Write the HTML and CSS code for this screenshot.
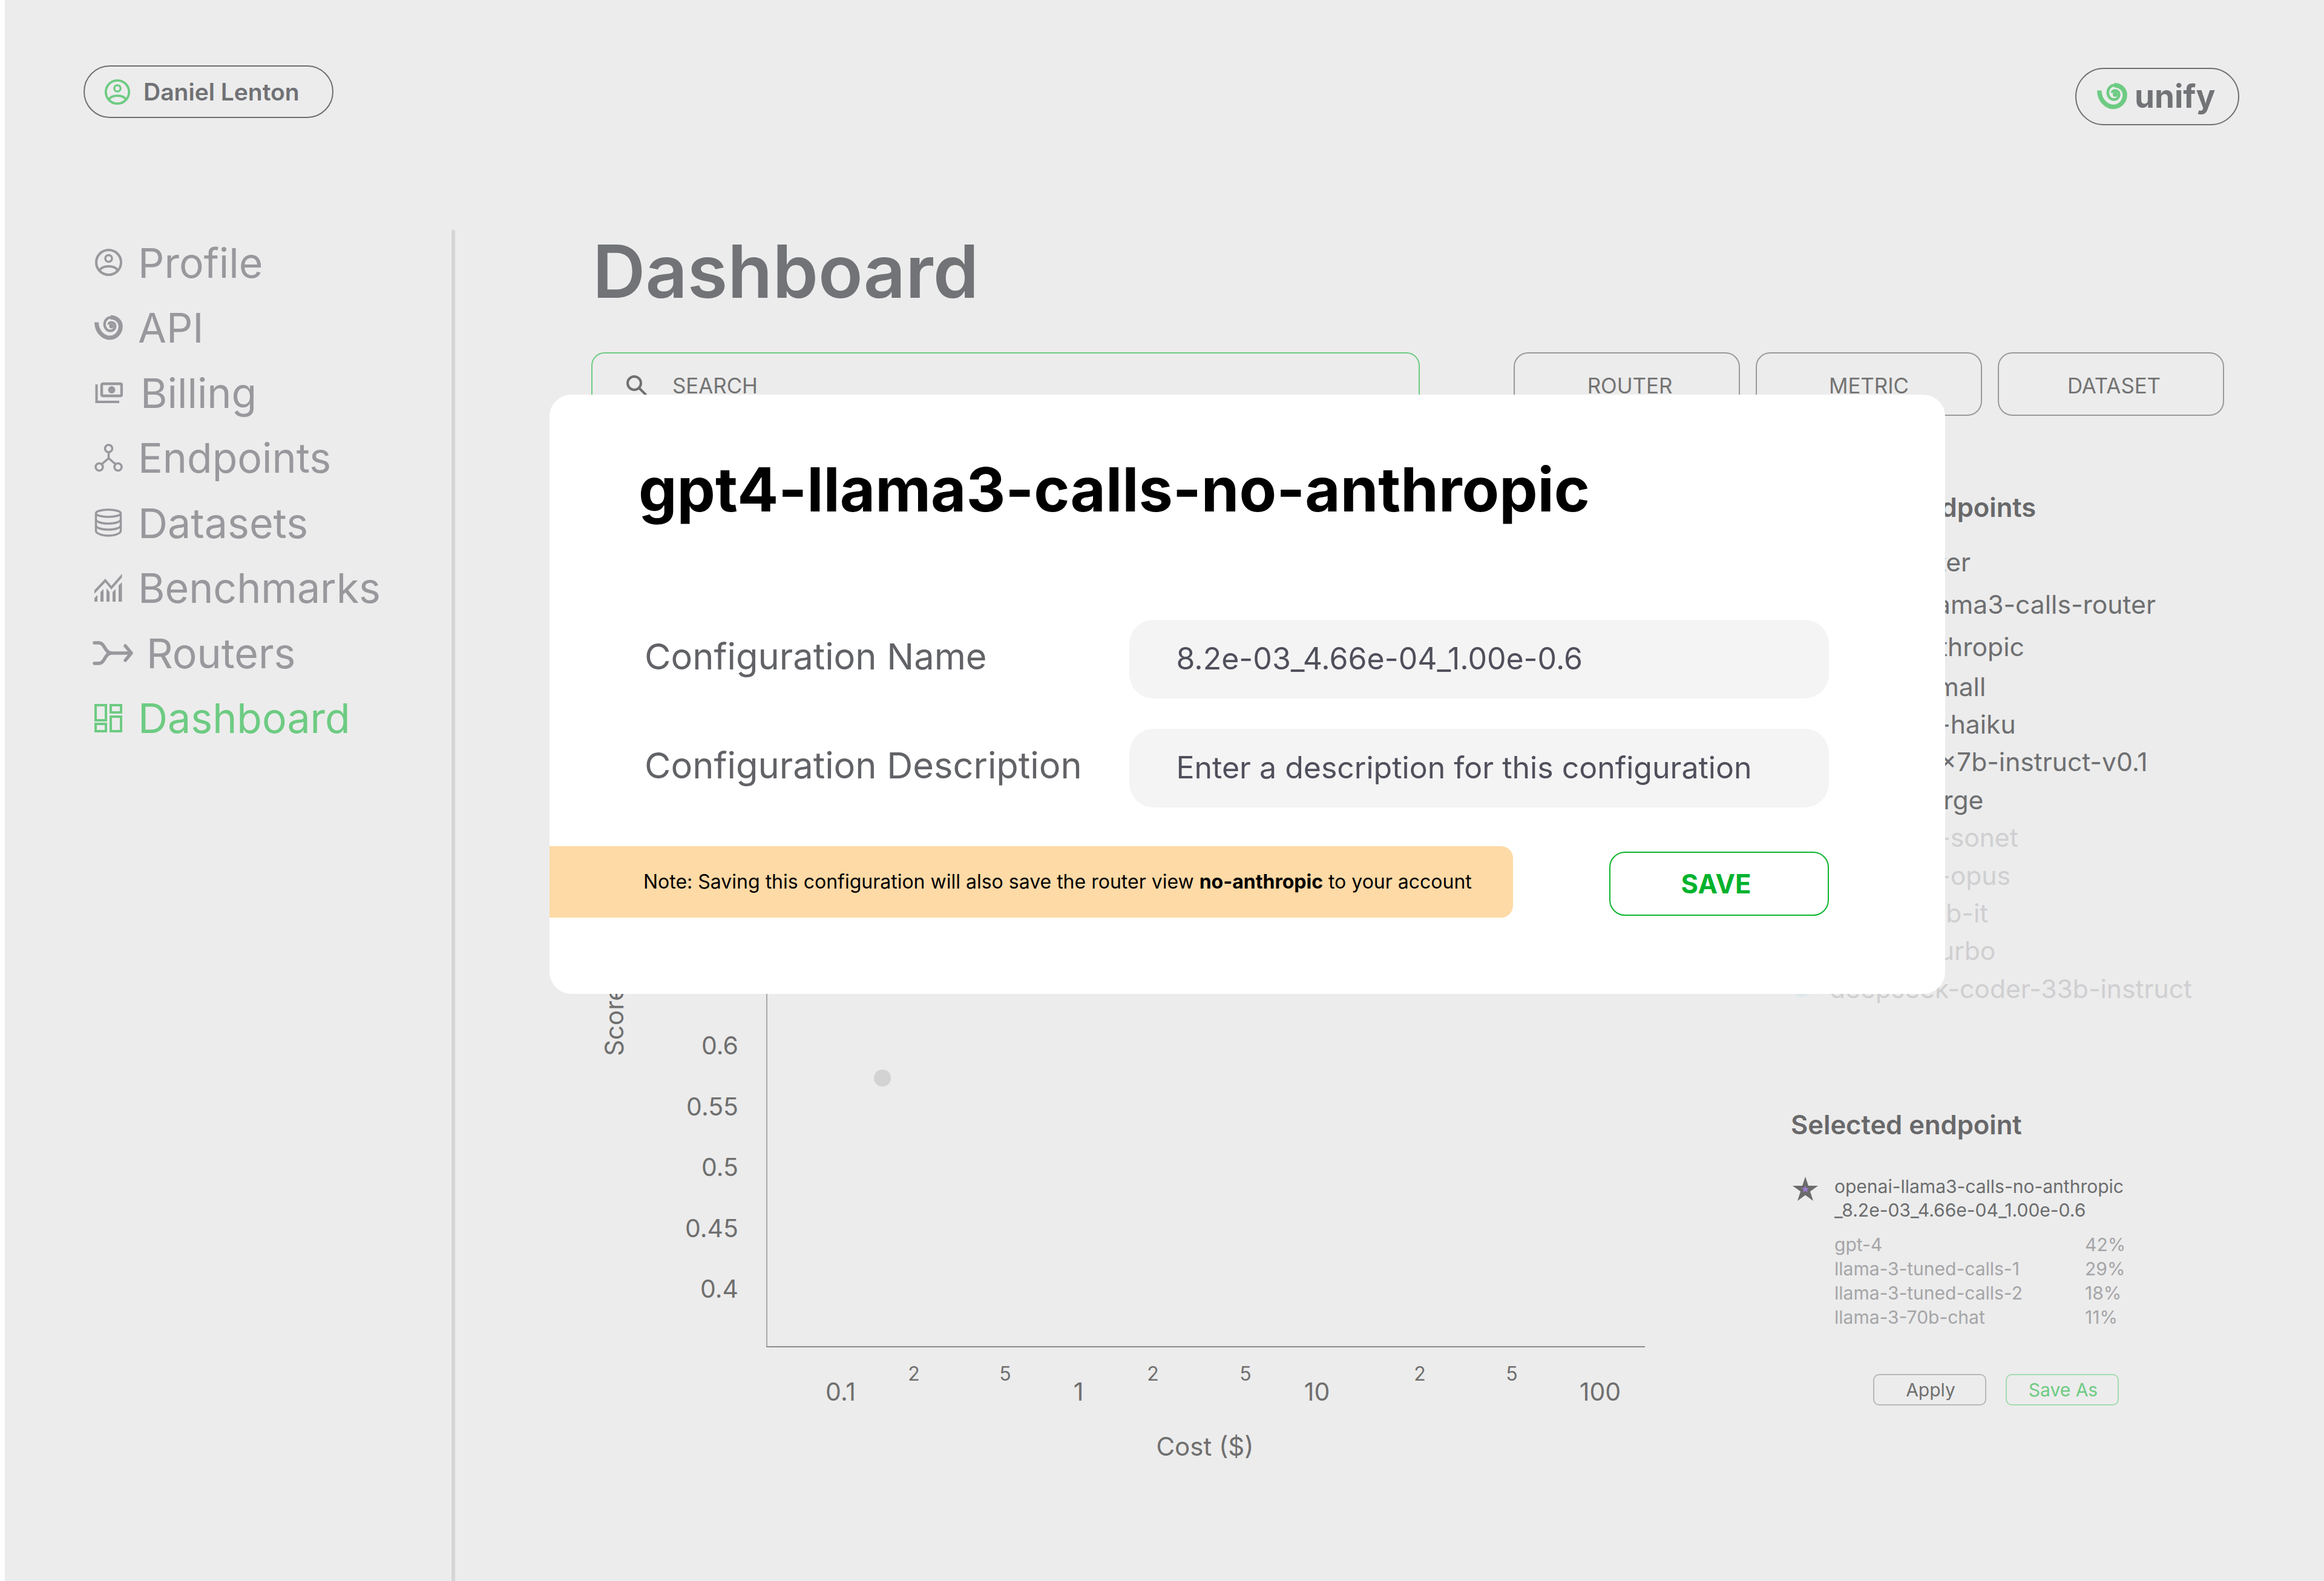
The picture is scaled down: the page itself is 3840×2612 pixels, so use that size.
FILE: index.html
```html
<!DOCTYPE html>
<html lang="en">
  <head>
    <meta charset="UTF-8" />
    <meta name="viewport" content="width=device-width, initial-scale=1.0" />
    <title>Dashboard</title>
    <link rel="stylesheet" href="styles.css">
  </head>

  <body>
    <svg class="defs" width="0" height="0">
      <symbol id="i-user" viewBox="0 0 47 47">
        <circle cx="23.5" cy="23.5" r="20.5" fill="none" stroke="currentColor" stroke-width="4" />
        <circle cx="23.5" cy="17" r="5.5" fill="none" stroke="currentColor" stroke-width="3.5" />
        <path d="M9 36c5-8 24-8 29 0" fill="none" stroke="currentColor" stroke-width="4" />
      </symbol>
      <symbol id="i-spiral" viewBox="0 0 50 44">
        <path d="M3.800 12.500C3.800 28 15 39.500 27 39.500C38 39.500 46 30 46 20C46 10 38 3.700 28.500 3.700" fill="none" stroke="currentColor" stroke-width="7.500" />
        <path d="M29.500 3.700C22 3.700 17.800 9.500 17.800 16C17.800 22.500 22.500 27.500 28 27.500C33 27.500 36.500 23.500 36.500 19C36.500 15 33 12.500 29.500 12.500C27 12.500 25 14 25 16.500" fill="none" stroke="currentColor" stroke-width="4.500" />
        <circle cx="30" cy="19" r="4" fill="currentColor" />
      </symbol>
    </svg>

    <div class="app">
      <header class="topbar">
        <div class="user-pill">
          <svg class="user-icon"><use href="#i-user" /></svg>
          <span>Daniel Lenton</span>
        </div>
        <div class="logo-pill">
          <svg class="logo-icon"><use href="#i-spiral" /></svg>
          <span>unify</span>
        </div>
      </header>

      <div class="layout">
        <nav class="sidebar">
          <a class="nav-item">
            <svg class="nav-icon"><use href="#i-user" /></svg>
            <span>Profile</span>
          </a>
          <a class="nav-item">
            <svg class="nav-icon" viewBox="0 0 50 47"><use href="#i-spiral" width="50" height="47" /></svg>
            <span>API</span>
          </a>
          <a class="nav-item nav-billing">
            <svg class="nav-icon" viewBox="0 0 47 47">
              <path d="M3.5 10V39H41" fill="none" stroke="currentColor" stroke-width="4" />
              <rect x="12" y="9" width="33" height="20" rx="2" fill="none" stroke="currentColor" stroke-width="4.5" />
              <circle cx="28.5" cy="19" r="6" fill="currentColor" />
            </svg>
            <span>Billing</span>
          </a>
          <a class="nav-item">
            <svg class="nav-icon" viewBox="0 0 47 47" fill="none" stroke="currentColor" stroke-width="3.5">
              <circle cx="23.5" cy="8" r="6" />
              <circle cx="8" cy="38.5" r="6" />
              <circle cx="39" cy="38.5" r="6" />
              <path d="M23.5 14V24L12 34M23.5 24L35 34" />
            </svg>
            <span>Endpoints</span>
          </a>
          <a class="nav-item">
            <svg class="nav-icon" viewBox="0 0 47 47" fill="none" stroke="currentColor" stroke-width="3.5">
              <ellipse cx="23" cy="8" rx="20.5" ry="6" />
              <path d="M2.5 8V37C2.5 41 11.5 45 23 45S43.500 41 43.500 37V8" />
              <path d="M2.5 18C2.5 22 11.500 25 23 25S43.500 22 43.500 18M2.500 28C2.500 32 11.500 35 23 35S43.500 32 43.500 28" />
            </svg>
            <span>Datasets</span>
          </a>
          <a class="nav-item">
            <svg class="nav-icon" viewBox="0 0 47 47">
              <path d="M0 27L18 8L28 20L45.500 0V6L28 26L18 14L0 33Z" fill="currentColor" />
              <path d="M0 40L5 35V46H0ZM10 30L15 25V46H10ZM20 24L25 30V46H20ZM30 30L35 25V46H30ZM40 19L45.500 14V46H40Z" fill="currentColor" />
            </svg>
            <span>Benchmarks</span>
          </a>
          <a class="nav-item nav-routers">
            <svg class="nav-icon" viewBox="0 0 67 40" fill="none" stroke="currentColor" stroke-width="5.500" stroke-linecap="round" stroke-linejoin="round">
              <path d="M3 3H10C21 3 19 20 32 20H63M3 37H10C21 37 19 20 32 20" />
              <path d="M54 8L64 20L54 32" />
            </svg>
            <span>Routers</span>
          </a>
          <a class="nav-item nav-active">
            <svg class="nav-icon" viewBox="0 0 47 47" fill="none" stroke="currentColor" stroke-width="4">
              <rect x="2" y="2" width="17" height="25" />
              <rect x="27" y="2" width="17" height="12" />
              <rect x="2" y="33" width="17" height="12" />
              <rect x="27" y="21" width="17" height="24" />
            </svg>
            <span>Dashboard</span>
          </a>
        </nav>

        <main class="content">
          <h1 class="page-title">Dashboard</h1>

          <div class="toolbar">
            <div class="search">
              <svg class="search-icon" viewBox="0 0 34 34" fill="none" stroke="currentColor" stroke-width="4">
                <circle cx="13" cy="13" r="11" />
                <path d="M21 21L33 33" />
              </svg>
              <span>SEARCH</span>
            </div>
            <div class="filters">
              <button class="filter-btn">ROUTER</button>
              <button class="filter-btn filter-metric">METRIC</button>
              <button class="filter-btn">DATASET</button>
            </div>
          </div>

          <div class="panels">
            <div class="chart">
              <div class="plot"></div>
              <span class="axis-title score-title">Score</span>
              <span class="tick y-tick" style="top: 1040px">0.6</span>
              <span class="tick y-tick" style="top: 1141px">0.55</span>
              <span class="tick y-tick" style="top: 1241px">0.5</span>
              <span class="tick y-tick" style="top: 1342px">0.45</span>
              <span class="tick y-tick" style="top: 1442px">0.4</span>
              <span class="tick x-tick" style="left: 412px">0.1</span>
              <span class="tick x-tick" style="left: 805px">1</span>
              <span class="tick x-tick" style="left: 1199px">10</span>
              <span class="tick x-tick" style="left: 1667px">100</span>
              <span class="tick x-minor" style="left: 533px">2</span>
              <span class="tick x-minor" style="left: 684px">5</span>
              <span class="tick x-minor" style="left: 928px">2</span>
              <span class="tick x-minor" style="left: 1081px">5</span>
              <span class="tick x-minor" style="left: 1369px">2</span>
              <span class="tick x-minor" style="left: 1521px">5</span>
              <span class="axis-title cost-title">Cost ($)</span>
              <span class="dot" style="left: 481px; top: 1094px"></span>
            </div>

            <aside class="side">
              <h3 class="side-title">Selected endpoints</h3>
              <ul class="endpoint-list">
                <li class="endpoint endpoint-tall"><i></i>gpt4-router</li>
                <li class="endpoint endpoint-tall"><i></i>openai-llama3-calls-router</li>
                <li class="endpoint endpoint-tall"><i></i>gpt-4-anthropic</li>
                <li class="endpoint"><i></i>mistral-small</li>
                <li class="endpoint"><i></i>claude-3-haiku</li>
                <li class="endpoint"><i></i>mixtral-8x7b-instruct-v0.1</li>
                <li class="endpoint"><i></i>mistral-large</li>
                <li class="endpoint endpoint-off"><i></i>claude-3-sonet</li>
                <li class="endpoint endpoint-off"><i></i>claude-3-opus</li>
                <li class="endpoint endpoint-off"><i></i>gemma-7b-it</li>
                <li class="endpoint endpoint-off"><i></i>gpt-3.5-turbo</li>
                <li class="endpoint endpoint-off"><i></i>deepseek-coder-33b-instruct</li>
              </ul>

              <h3 class="side-title selected-title">Selected endpoint</h3>
              <div class="selected">
                <svg class="star" viewBox="0 0 42 40">
                  <path d="M21 0L26 15H42L29 24.500L34 40L21 30.500L8 40L13 24.500L0 15H16Z" fill="#6b6b6b" />
                  <path d="M21 15L22.500 19H27L23.500 21.800L24.800 26L21 23.500L17.200 26L18.500 21.800L15 19H19.500Z" fill="#a07fd8" />
                </svg>
                <div class="selected-body">
                  <div class="selected-name">openai-llama3-calls-no-anthropic<br />_8.2e-03_4.66e-04_1.00e-0.6</div>
                  <div class="share-grid">
                    <span>gpt-4</span><span>42%</span>
                    <span>llama-3-tuned-calls-1</span><span>29%</span>
                    <span>llama-3-tuned-calls-2</span><span>18%</span>
                    <span>llama-3-70b-chat</span><span>11%</span>
                  </div>
                </div>
              </div>
              <div class="side-actions">
                <button class="small-btn">Apply</button>
                <button class="small-btn small-btn-green">Save As</button>
              </div>
            </aside>
          </div>
        </main>
      </div>

      <!-- save dialog, sits over the dashboard -->
      <div class="modal">
        <h2 class="modal-title">gpt4-llama3-calls-no-anthropic</h2>
        <form class="modal-form">
          <label class="field-label">Configuration Name</label>
          <div class="field-input">8.2e-03_4.66e-04_1.00e-0.6</div>
          <label class="field-label">Configuration Description</label>
          <div class="field-input">Enter a description for this configuration</div>
        </form>
        <div class="modal-footer">
          <div class="note">Note: Saving this configuration will also save the router view <b>no-anthropic</b> to your account</div>
          <button class="save-btn">SAVE</button>
        </div>
      </div>
    </div>
  </body>
</html>
```

FILE: styles.css
```css
* {
  box-sizing: border-box;
}

body {
  margin: 0;
  background: #ffffff;
  font-family: "Inter", "Liberation Sans", sans-serif;
}

.defs {
  position: absolute;
}

.app {
  position: relative;
  margin-left: 8px;
  height: 2612px;
  background: #ececec;
  overflow: hidden;
}

/* top bar */
.topbar {
  display: flex;
  justify-content: space-between;
  align-items: flex-start;
  height: 380px;
  padding: 108px 140px 0 130px;
}

.user-pill {
  display: flex;
  align-items: center;
  gap: 21px;
  width: 413px;
  height: 87px;
  padding-left: 32px;
  border: 2px solid #6f6f72;
  border-radius: 44px;
  color: #707175;
  font-size: 39px;
  font-weight: 600;
}

.user-icon {
  width: 44px;
  height: 44px;
  color: #6dcb82;
}

.logo-pill {
  display: flex;
  align-items: center;
  gap: 12px;
  width: 271px;
  height: 95px;
  margin-top: 4px;
  padding: 0 0 1px 34px;
  border: 2px solid #6f6f72;
  border-radius: 48px;
  color: #727376;
  font-size: 53px;
  font-weight: 700;
}

.logo-icon {
  width: 50px;
  height: 44px;
  color: #6dcb82;
}

.layout {
  display: flex;
  height: 2232px;
}

/* sidebar */
.sidebar {
  flex: none;
  width: 744px;
  padding-left: 148px;
  border-right: 6px solid #d6d6d6;
}

.nav-item {
  display: flex;
  align-items: center;
  gap: 25px;
  height: 107.5px;
  color: #98989d;
  font-size: 68px;
}

.nav-icon {
  flex: none;
  width: 47px;
  height: 47px;
}

.nav-billing {
  gap: 29px;
}

.nav-routers {
  gap: 22px;
  margin-left: -3px;
}

.nav-routers .nav-icon {
  width: 67px;
  height: 40px;
}

.nav-active {
  color: #6dcb82;
}

/* main */
.content {
  flex: 1;
  padding-left: 225px;
}

.page-title {
  height: 202px;
  margin: 0 0 0 2px;
  color: #717377;
  font-size: 121px;
  font-weight: 600;
  line-height: 136px;
}

.toolbar {
  display: flex;
  gap: 155px;
}

.search {
  display: flex;
  align-items: center;
  gap: 42px;
  width: 1369px;
  height: 105px;
  padding: 5px 0 0 56px;
  border: 2px solid #6dcb82;
  border-radius: 22px;
  color: #737373;
  font-size: 34.8px;
}

.search-icon {
  width: 34px;
  height: 34px;
  color: #6f6f6f;
}

.filters {
  display: flex;
  gap: 26px;
}

.filter-btn {
  width: 374px;
  height: 105px;
  padding: 5px 0 0 10px;
  border: 2px solid #9a9a9a;
  border-radius: 24px;
  background: none;
  color: #737373;
  font-family: inherit;
  font-size: 34.8px;
}

.filter-metric {
  padding-left: 0;
}

.panels {
  display: flex;
}

/* chart is a free canvas, origin at the panel top left */
.chart {
  position: relative;
  flex: none;
  width: 1982px;
  height: 1800px;
  color: #6f6f6f;
}

.plot {
  position: absolute;
  left: 289px;
  top: 500px;
  width: 1452px;
  height: 1039px;
  border-left: 2px solid #a8a8a8;
  border-bottom: 2px solid #8a8a8a;
}

.tick {
  position: absolute;
  line-height: 1;
}

.y-tick {
  left: 243px;
  font-size: 41px;
  transform: translate(-100%, -50%);
}

.x-tick {
  top: 1612px;
  font-size: 41px;
  transform: translate(-50%, -50%);
}

.x-minor {
  top: 1583px;
  font-size: 32px;
  transform: translate(-50%, -50%);
}

.axis-title {
  position: absolute;
  font-size: 42px;
  line-height: 1;
}

.score-title {
  left: 38px;
  top: 1000px;
  transform: translate(-50%, -50%) rotate(-90deg);
}

.cost-title {
  left: 1014px;
  top: 1703px;
  transform: translate(-50%, -50%);
}

.dot {
  position: absolute;
  width: 28px;
  height: 28px;
  border-radius: 50%;
  background: #d3d3d3;
  transform: translate(-50%, -50%);
}

/* right column */
.side {
  flex: 1;
  padding-top: 125px;
}

.side-title {
  margin: 0;
  color: #68686a;
  font-size: 43.5px;
  font-weight: 600;
  line-height: 52px;
}

.endpoint-list {
  margin: 29px 0 0;
  padding: 0;
  list-style: none;
}

.endpoint {
  display: flex;
  align-items: center;
  gap: 31px;
  height: 62.4px;
  color: #6e6f71;
  font-size: 42.6px;
  white-space: nowrap;
}

.endpoint i {
  flex: none;
  width: 30px;
  height: 30px;
  margin-left: 3px;
  border-radius: 50%;
  background: #dfe8ea;
}

.endpoint-tall {
  height: 70px;
}

.endpoint-off {
  color: #cfcfd1;
}

.selected-title {
  margin-top: 167px;
}

.selected {
  display: flex;
  gap: 27px;
  margin-top: 57px;
}

.star {
  flex: none;
  width: 42px;
  height: 40px;
  margin: 3px 0 0 3px;
}

.selected-body {
  flex: 1;
}

.selected-name {
  color: #6b6c6e;
  font-size: 30px;
  line-height: 39.5px;
}

.share-grid {
  display: grid;
  grid-template-columns: 414px auto;
  margin-top: 16px;
  color: #a5a5a8;
  font-size: 30px;
  line-height: 40px;
}

.side-actions {
  display: flex;
  gap: 32px;
  margin: 74px 0 0 136px;
}

.small-btn {
  width: 187px;
  height: 52px;
  padding: 0 0 0 3px;
  border: 2px solid #b8b8b8;
  border-radius: 10px;
  background: none;
  color: #6f6f6f;
  font-family: inherit;
  font-size: 30px;
}

.small-btn-green {
  border-color: #a3dcb0;
  color: #6dcb82;
}

/* modal */
.modal {
  position: absolute;
  left: 900px;
  top: 652px;
  width: 2306px;
  height: 990px;
  padding-top: 97px;
  border-radius: 36px;
  background: #ffffff;
}

.modal-title {
  margin: 0;
  padding-left: 147px;
  color: #000000;
  font-size: 100.6px;
  font-weight: 700;
  line-height: 120px;
}

.modal-form {
  display: grid;
  grid-template-columns: 800.5px 1156.5px;
  row-gap: 50px;
  align-items: center;
  margin-top: 155px;
  padding-left: 157px;
}

.field-label {
  margin-bottom: 11px;
  color: #626367;
  font-size: 59.6px;
}

.field-input {
  height: 130px;
  padding-left: 78px;
  border-radius: 40px;
  background: #f4f4f5;
  color: #50505c;
  font-size: 50px;
  line-height: 129px;
}

.modal-footer {
  display: flex;
  align-items: flex-start;
  gap: 159px;
  margin-top: 64px;
}

.note {
  width: 1592px;
  height: 118px;
  padding-left: 155px;
  border-radius: 0 20px 20px 0;
  background: #fedaa6;
  color: #000000;
  font-size: 32px;
  line-height: 118px;
  white-space: nowrap;
}

.save-btn {
  width: 363px;
  height: 106px;
  margin-top: 9px;
  padding: 0 10px 0 0;
  border: 2px solid #0cb52f;
  border-radius: 26px;
  background: #ffffff;
  color: #00b22d;
  font-family: inherit;
  font-size: 43.5px;
  font-weight: 700;
}
```
